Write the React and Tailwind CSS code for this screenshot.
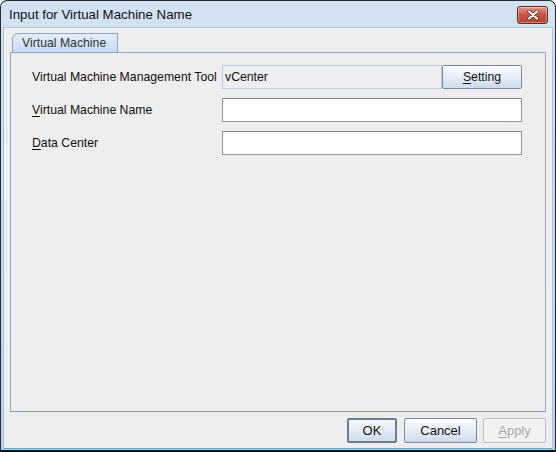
import React from "react";

function U({ children }) {
  return <span className="underline underline-offset-[2px]">{children}</span>;
}

export default function App() {
  return (
    <div className="w-[556px] h-[452px] font-['Liberation_Sans',Arial,sans-serif] text-[12.25px] text-[#000] bg-white">
      <div className="w-full h-full flex flex-col border border-[#2a2a2a] border-b-[2px] border-b-[#111] rounded-t-[7px] bg-gradient-to-b from-[#d3e3f4] to-[#bcd3ec] overflow-hidden">
        {/* title bar */}
        <div className="h-[26px] shrink-0 flex items-center justify-between pl-[8px] pr-[7px]">
          <span className="text-[13.3px] text-[#111] mt-[1px]">Input for Virtual Machine Name</span>
          <div className="w-[31px] h-[18px] mt-[2px] rounded-[3px] border border-[#5a2a24] bg-gradient-to-b from-[#e49a8a] via-[#c8503a] to-[#b8442e] flex items-center justify-center shadow-[inset_0_0_0_1px_rgba(255,255,255,0.35)]">
            <svg width="12" height="10" viewBox="0 0 12 10">
              <path d="M2 1.5 L10 8.5 M10 1.5 L2 8.5" stroke="#5a2a24" strokeWidth="3.6" strokeLinecap="round" />
              <path d="M2 1.5 L10 8.5 M10 1.5 L2 8.5" stroke="#ffffff" strokeWidth="2.2" strokeLinecap="round" />
            </svg>
          </div>
        </div>
        {/* client */}
        <div className="flex-1 mx-[2px] mb-[1px] border border-[#a9c6e4] border-b-[#3cb4d8] bg-[#eeeeee] flex flex-col pl-[6px] pr-[6px] pt-[5px] pb-[5px]">
          {/* tab header */}
          <div className="flex pl-[2px]">
            <div className="relative w-[106px] h-[19px] border border-b-0 border-[#8aa6c8] rounded-tl-[6px] rounded-tr-[1px] bg-gradient-to-b from-[#e3eefa] to-[#c8dcf2] flex items-center pl-[9px] text-[#333]">
              Virtual Machine
            </div>
          </div>
          {/* tab pane */}
          <div className="flex-1 border border-[#8aa6c8] border-b-[#8a98a8] border-r-[#9aa6b4] pl-[21px] pt-[12px]">
            <div className="grid grid-cols-[190px_300px] gap-y-[9px] items-center">
              <div className="text-[#111]">Virtual Machine Management Tool</div>
              <div className="flex h-[24px]">
                <div className="w-[220px] h-full border border-[#b4cde6] bg-[#eeeeee] flex items-center pl-[2px] text-[#111]">
                  vCenter
                </div>
                <button className="w-[80px] h-full rounded-[2px] border border-[#7a8a9c] bg-gradient-to-b from-[#fbfdff] via-[#e6eef8] to-[#cddceb] flex items-center justify-center text-[#111]">
                  <U>S</U>etting
                </button>
              </div>

              <div className="text-[#111]">
                <U>V</U>irtual Machine Name
              </div>
              <div className="h-[24px] border border-[#8d959e] border-t-[#7a828c] bg-white"></div>

              <div className="text-[#111]">
                <U>D</U>ata Center
              </div>
              <div className="h-[24px] border border-[#8d959e] border-t-[#7a828c] bg-white"></div>
            </div>
          </div>
          {/* buttons */}
          <div className="flex justify-end gap-[6px] pt-[6px] pr-[0px]">
            <button className="w-[50px] h-[25px] rounded-[2px] border-[2px] border-[#6a7c8e] bg-gradient-to-b from-[#f6f9fd] via-[#e4ecf6] to-[#cfdcea] flex items-center justify-center text-[#111] text-[13px]">
              OK
            </button>
            <button className="w-[73px] h-[25px] ml-[1px] rounded-[2px] border border-[#7a8a9c] bg-gradient-to-b from-[#fbfdff] via-[#e6eef8] to-[#cddceb] flex items-center justify-center text-[#111] text-[13px]">
              Cancel
            </button>
            <button className="w-[63px] h-[25px] rounded-[2px] border border-[#b8bcc0] bg-[#f2f2f2] flex items-center justify-center text-[#a9a9b2] text-[13px]">
              <U>A</U>pply
            </button>
          </div>
        </div>
      </div>
    </div>
  );
}
